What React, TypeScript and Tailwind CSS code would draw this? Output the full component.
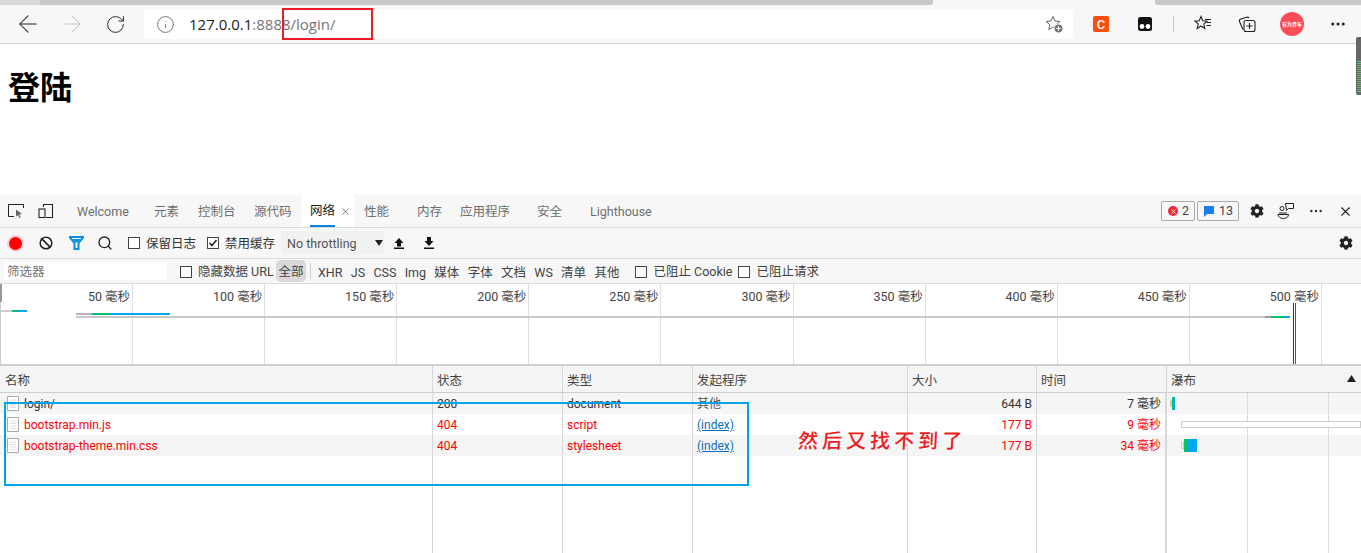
import { ArrowLeft, ArrowRight, RotateCw, Info, X, Search, Ban, MoreHorizontal } from 'lucide-react';
import { FaCog } from 'react-icons/fa';

const sans = 'font-["Roboto","Noto_Sans_CJK_SC",sans-serif]';

const tabs = [
  { label: 'Welcome', w: 'w-[77px]' },
  { label: '元素', w: 'w-[44px]' },
  { label: '控制台', w: 'w-[56px]' },
  { label: '源代码', w: 'w-[47px]' },
];
const tabsAfter = [
  { label: '性能', w: 'w-[53px]' },
  { label: '内存', w: 'w-[43px]' },
  { label: '应用程序', w: 'w-[77px]' },
  { label: '安全', w: 'w-[53px]' },
  { label: 'Lighthouse', w: 'w-[80px]' },
];
const filters = ['XHR', 'JS', 'CSS', 'Img', '媒体', '字体', '文档', 'WS', '清单', '其他'];
const ticks = ['50 毫秒', '100 毫秒', '150 毫秒', '200 毫秒', '250 毫秒', '300 毫秒', '350 毫秒', '400 毫秒', '450 毫秒', '500 毫秒'];
const columns = 'grid grid-cols-[433px_130px_130px_215px_129px_130px_1fr]';

const rows = [
  { name: 'login/', status: '200', type: 'document', from: '其他', size: '644 B', time: '7 毫秒', red: false, odd: true },
  { name: 'bootstrap.min.js', status: '404', type: 'script', from: '(index)', size: '177 B', time: '9 毫秒', red: true, odd: false },
  { name: 'bootstrap-theme.min.css', status: '404', type: 'stylesheet', from: '(index)', size: '177 B', time: '34 毫秒', red: true, odd: true },
];

function Checkbox({ checked, label }: { checked?: boolean; label: string }) {
  return (
    <label className="flex items-center gap-[6px] whitespace-nowrap">
      <span className="flex h-[12px] w-[12px] shrink-0 items-center justify-center border border-[#444] bg-white">
        {checked && (
          <svg width="10" height="10" viewBox="0 0 10 10" fill="none" stroke="#222" strokeWidth="1.6">
            <path d="M1.5 5l2.5 2.5L8.5 2" />
          </svg>
        )}
      </span>
      <span className="pt-[2px]">{label}</span>
    </label>
  );
}

function BrowserBar() {
  return (
    <div className="shrink-0">
      <div className="flex h-[5px] bg-[#f7f7f7]">
        <span className="w-[40px] bg-[#d9d9d9]" />
        <span className="w-[893px] rounded-br-[3px] bg-[#c9c9c9]" />
        <span className="ml-[222px] flex-1 rounded-bl-[3px] bg-[#c9c9c9]" />
      </div>
      <div className="flex h-[39px] items-center border-b border-[#cfcfcf] bg-[#f7f7f7]">
        <div className="flex w-[144px] items-center pl-[14px]">
          <ArrowLeft size={28} strokeWidth={0.9} className="text-[#222]" />
          <ArrowRight size={28} strokeWidth={0.9} className="ml-[16px] text-[#c8c8c8]" />
          <RotateCw size={21} strokeWidth={1.1} className="ml-[19px] text-[#222]" />
        </div>
        <div className="flex h-[30px] w-[929px] items-center rounded-[4px] bg-white pl-[12px] pr-[10px]">
          <Info size={19} strokeWidth={1.1} className="text-[#666]" />
          <span className='ml-[14px] font-["Open_Sans",sans-serif] text-[15px] text-[#222]'>127.0.0.1<span className="text-[#767676]">:8888/login/</span></span>
          <svg className="ml-auto" width="18" height="18" viewBox="0 0 18 18" fill="none" stroke="#666" strokeWidth="1">
            <path d="M8 1.500l2 4.500 4.800.5-3.600 3.200 1 4.800-4.200-2.500-4.200 2.500 1-4.800L1.200 6.500 6 6z" />
            <circle cx="13.500" cy="13.500" r="4.500" fill="#777" stroke="#fff" />
            <path d="M13.500 11.300v4.400M11.300 13.500h4.400" stroke="#fff" />
          </svg>
        </div>
        <div className="flex h-full flex-1 items-center">
          <span className="ml-[20px] flex h-[16px] w-[16px] items-center justify-center rounded-[2px] bg-[#fb4c0b] text-[13px] font-medium leading-none text-white">C</span>
          <svg className="ml-[28px]" width="16" height="16" viewBox="0 0 16 16">
            <rect x="1" y="1" width="14" height="14" rx="2.500" fill="#111" />
            <circle cx="5" cy="10.500" r="2.400" fill="#fff" />
            <circle cx="11" cy="10.500" r="2.400" fill="#fff" />
          </svg>
          <span className="ml-[20px] h-[16px] w-px bg-[#ccc]" />
          <svg className="ml-[20px]" width="18" height="18" viewBox="0 0 18 18" fill="none" stroke="#222" strokeWidth="1.100">
            <path d="M7 1.500l1.800 4.300 4.200.3-3.200 2.800 1 4.600L7 11l-3.800 2.500 1-4.600L1 6.100l4.200-.3z" />
            <path d="M11 4.500h6M12.500 7.500h4.500M12.500 10.500h4.500" />
          </svg>
          <svg className="ml-[26px]" width="18" height="18" viewBox="0 0 18 18" fill="none" stroke="#222" strokeWidth="1.100">
            <path d="M5 14.500L1.500 6.500a2 2 0 0 1 1.300-2.500l6-1.800a2 2 0 0 1 2.200.8" />
            <rect x="6" y="5.500" width="11" height="11" rx="2" />
            <path d="M11.500 8v6M8.500 11h6" />
          </svg>
          <span className="ml-[24px] flex h-[24px] w-[24px] flex-col items-center justify-center rounded-full bg-[#fb4d57] text-[5px] font-bold leading-[6px] text-white">有为青年</span>
          <MoreHorizontal size={18} strokeWidth={2} className="ml-[25px] text-[#222]" />
        </div>
      </div>
    </div>
  );
}

function DevtoolsTabs() {
  return (
    <div className="flex h-[33px] shrink-0 items-center border-b border-[#dcdcdc] bg-[#f7f7f7] pl-[8px] text-[#6e6e6e] shadow-[0_1px_2px_rgba(0,0,0,0.06)]">
      <svg width="16" height="16" viewBox="0 0 16 16" fill="none" stroke="#222" strokeWidth="1">
        <path d="M15.500 5V1.500H.5v12H6" />
        <path d="M8 6.500l6 4.500-2.800.5 1.600 3-1.200.6-1.500-3L8 13.500z" fill="#666" stroke="none" />
      </svg>
      <svg className="ml-[14px]" width="16" height="16" viewBox="0 0 16 16" fill="none" stroke="#222" strokeWidth="1.100">
        <path d="M5.500 4V1.500h9v13H8" />
        <rect x="1" y="6" width="6" height="8.500" />
      </svg>
      <div className="ml-[23px] flex h-full items-center">
        {tabs.map((t) => (
          <span key={t.label} className={`${t.w} pt-[3px]`}>{t.label}</span>
        ))}
        <span className="flex h-full w-[53px] items-center bg-white pl-[9px] text-[#222]">
          <span className="flex h-full flex-col justify-center border-b-2 border-[#0a84d8] pt-[3px]">网络</span>
          <X size={11} strokeWidth={1.5} className="ml-[5px] text-[#444]" />
        </span>
        <span className="w-[10px]" />
        {tabsAfter.map((t) => (
          <span key={t.label} className={`${t.w} pt-[3px]`}>{t.label}</span>
        ))}
      </div>
      <div className="ml-auto flex items-center pr-[8px]">
        <span className="flex h-[20px] w-[34px] items-center gap-[4px] rounded-[2px] border border-[#aaa] pl-[6px] text-[#444]">
          <span className="flex h-[10px] w-[10px] items-center justify-center rounded-full bg-[#ee2a3a]">
            <X size={7} strokeWidth={3} className="text-white" />
          </span>
          2
        </span>
        <span className="ml-[2px] flex h-[20px] w-[42px] items-center gap-[5px] rounded-[2px] border border-[#aaa] pl-[6px] text-[#444]">
          <svg width="10" height="11" viewBox="0 0 10 11">
            <path d="M0 0h10v8H3L0 11z" fill="#1a7fe8" />
          </svg>
          13
        </span>
        <FaCog size={14} color="#222" className="ml-[11px]" />
        <svg className="ml-[13px]" width="18" height="18" viewBox="0 0 18 18" fill="none" stroke="#222" strokeWidth="1">
          <circle cx="5" cy="6.500" r="2" />
          <path d="M8.500 1.500h8v5h-5l-2 1.800z" />
          <path d="M1 12.500h10.500c0 2.500-2.500 4-5.200 4S1 15 1 12.500z" />
          <path d="M2 11h8" />
        </svg>
        <MoreHorizontal size={16} strokeWidth={1.6} className="ml-[13px] text-[#333]" />
        <X size={15} strokeWidth={1.8} className="ml-[14px] text-[#222]" />
      </div>
    </div>
  );
}

function NetworkToolbar() {
  return (
    <div className="flex h-[31px] shrink-0 items-center border-b border-[#dcdcdc] bg-[#f7f7f7] pl-[9px] text-[#333]">
      <span className="h-[13px] w-[13px] rounded-full bg-[#f00] shadow-[0_0_0_2px_rgba(255,0,0,0.15)]" />
      <Ban size={14} strokeWidth={2.6} className="ml-[17px] text-[#222]" />
      <svg className="ml-[16px]" width="15" height="14" viewBox="0 0 15 14">
        <path d="M0.500 1h14L9.500 7v6h-4V7z" fill="none" stroke="#0a8fe0" strokeWidth="2" />
        <path d="M3 3h9L8.500 6.500h-2z" fill="#0a8fe0" />
      </svg>
      <Search size={16} strokeWidth={2} className="ml-[13px] text-[#222]" />
      <span className="ml-[15px]"><Checkbox label="保留日志" /></span>
      <span className="ml-[11px]"><Checkbox checked label="禁用缓存" /></span>
      <span className="ml-[6px] flex h-[24px] w-[103px] items-center justify-between bg-[#f1f1f1] pl-[6px] pr-[1px] text-[#555]">
        <span className="pt-[2px]">No throttling</span>
        <svg width="8" height="8" viewBox="0 0 8 8"><path d="M0 1h8L4 7z" fill="#222" /></svg>
      </span>
      <svg className="ml-[9px]" width="12" height="12" viewBox="0 0 12 12" fill="#111"><path d="M6 1l4.500 5H8v3.500H4V6H1.500zM1 10.500h10V12H1z" /></svg>
      <svg className="ml-[18px]" width="12" height="12" viewBox="0 0 12 12" fill="#111"><path d="M4 0h4v4h2.500L6 9 1.500 4H4zM1 10.500h10V12H1z" /></svg>
      <FaCog size={14} color="#222" className="ml-auto mr-[8px]" />
    </div>
  );
}

function FilterBar() {
  return (
    <div className="flex h-[25px] shrink-0 items-center border-b border-[#dcdcdc] bg-[#f7f7f7] pl-[4px] text-[#444]">
      <span className="flex h-[18px] w-[163px] items-center bg-white pl-[3px] pt-[3px] text-[#757575]">筛选器</span>
      <span className="ml-[13px] w-[90px] pt-[1px]"><Checkbox label="隐藏数据 URL" /></span>
      <span className="ml-[6px] flex h-[22px] w-[30px] items-center justify-center rounded-[5px] bg-[#d8d8d8] pt-[3px]">全部</span>
      <span className="ml-[4px] h-[16px] w-px bg-[#ccc]" />
      <div className="ml-[7px] flex items-center gap-[8.3px] pt-[4px]">
        {filters.map((f) => <span key={f}>{f}</span>)}
      </div>
      <span className="ml-[16px] w-[93px] pt-[1px]"><Checkbox label="已阻止 Cookie" /></span>
      <span className="ml-[10px] pt-[1px]"><Checkbox label="已阻止请求" /></span>
    </div>
  );
}

function Timeline() {
  return (
    <div className="relative h-[80px] shrink-0 overflow-hidden bg-white text-[#444]">
      <div className="flex h-full">
        <div className="w-[1px] bg-[#ccc]" />
        {ticks.map((t) => (
          <div key={t} className="h-full w-[132.1px] shrink-0 border-r border-[#e0e0e0] pr-[2px] pt-[4px] text-right">{t}</div>
        ))}
      </div>
      <div className="absolute left-0 top-0 h-[18px] w-[2px] bg-[#999]" />
      {/* first request bar */}
      <div className="absolute left-[1px] top-[26px] flex h-[2px] w-[26px]">
        <span className="w-[11px] bg-[#ccc]" />
        <span className="w-[5px] bg-[#0ac26a]" />
        <span className="flex-1 bg-[#00a8f0]" />
      </div>
      <div className="absolute left-[76px] top-[29px] flex h-[2px] w-[94px]">
        <span className="w-[16px] bg-[#b5b5b5]" />
        <span className="w-[18px] bg-[#0ac26a]" />
        <span className="flex-1 bg-[#00a8f0]" />
      </div>
      <div className="absolute left-[76px] top-[32px] flex h-[2px] w-[1214px] bg-[#c8c8c8]">
        <span className="absolute right-[19px] h-[2px] w-[6px] bg-[#999]" />
        <span className="absolute right-[7px] h-[2px] w-[12px] bg-[#0ac26a]" />
        <span className="absolute right-0 h-[2px] w-[7px] bg-[#00a8f0]" />
      </div>
      <div className="absolute left-[1293px] top-[19px] h-[61px] w-[1px] bg-[#b00020]" />
      <div className="absolute left-[1295px] top-[19px] h-[61px] w-[1px] bg-[#1a5fc0]" />
    </div>
  );
}

function Waterfall({ index }: { index: number }) {
  return (
    <div className="relative h-full">
      <span className="absolute left-[80px] top-0 h-full w-px bg-[#dcdcdc]" />
      <span className="absolute left-[161px] top-0 h-full w-px bg-[#dcdcdc]" />
      {index === 0 && (
        <span className="absolute left-[3px] top-[4px] flex h-[13px] items-center">
          <span className="h-[7px] w-[2px] border border-[#ccc]" />
          <span className="h-[13px] w-[1px] bg-[#0ac26a]" />
          <span className="h-[13px] w-[2px] bg-[#00a8f0]" />
        </span>
      )}
      {index === 1 && <span className="absolute left-[14px] top-[7px] h-[7px] w-[180px] border border-[#ccc] bg-white" />}
      {index === 2 && (
        <span className="absolute left-[14px] top-[4px] flex h-[13px] items-center">
          <span className="h-[7px] w-[3px] border border-[#ccc]" />
          <span className="h-[13px] w-[3px] bg-[#0ac26a]" />
          <span className="h-[13px] w-[10px] bg-[#00a8f0]" />
        </span>
      )}
    </div>
  );
}

function RequestTable() {
  const cell = 'border-r border-[#d8d8d8] pl-[4px] truncate';
  return (
    <div className="flex min-h-0 flex-1 flex-col border-t-2 border-[#cfcfcf] bg-white">
      <div className={`${columns} h-[27px] shrink-0 items-stretch border-b border-[#cfcfcf] bg-[#f5f5f5] leading-[29px] text-[#444]`}>
        {['名称', '状态', '类型', '发起程序', '大小', '时间'].map((h) => (
          <div key={h} className={cell}><span className={h === '名称' ? 'ml-[1px]' : ''}>{h}</span></div>
        ))}
        <div className="flex justify-between pl-[4px] pr-[5px]">
          瀑布
          <svg className="mt-[9px]" width="9" height="7" viewBox="0 0 9 7"><path d="M0 7L4.500 0 9 7z" fill="#222" /></svg>
        </div>
      </div>
      {rows.map((r, i) => (
        <div
          key={r.name}
          className={`${columns} h-[21px] shrink-0 text-[12px] leading-[23px] ${r.odd ? 'bg-[#f5f5f5]' : 'bg-white'} ${r.red ? 'text-[#f00]' : 'text-[#333]'}`}
        >
          <div className={`${cell} flex h-[21px] items-center gap-[5px] pl-[7px]`}>
            <svg width="12" height="15" viewBox="0 0 12 15" fill="#fff" stroke="#aaa">
              <path d="M0.500 0.500h11v14h-11z" />
              <path d="M3 4h6M3 6.500h6M3 9h6M3 11.500h6" stroke="#ddd" />
            </svg>
            <span className="pt-[2px]">{r.name}</span>
          </div>
          <div className={`${cell} h-[21px]`}>{r.status}</div>
          <div className={`${cell} h-[21px]`}>{r.type}</div>
          <div className={`${cell} h-[21px] ${r.red ? 'text-[#0b6cb8] underline' : 'text-[#555]'}`}>{r.from}</div>
          <div className={`${cell} h-[21px] pr-[4px] text-right`}>{r.size}</div>
          <div className={`${cell} h-[21px] border-r-2 pr-[4px] text-right`}>{r.time}</div>
          <Waterfall index={i} />
        </div>
      ))}
      <div className={`${columns} flex-1`}>
        {[0, 1, 2, 3, 4].map((n) => <div key={n} className={cell} />)}
        <div className="border-r-2 border-[#d8d8d8]" />
        <Waterfall index={-1} />
      </div>
    </div>
  );
}

export default function App() {
  return (
    <div className={`relative flex h-[553px] w-[1361px] flex-col overflow-hidden bg-white text-[12.5px] ${sans}`}>
      <BrowserBar />
      <main className="h-[151px] shrink-0 pl-[8px] pt-[20px]">
        <h1 className="text-[32px] font-bold leading-[48px] text-black">登陆</h1>
      </main>
      <DevtoolsTabs />
      <NetworkToolbar />
      <FilterBar />
      <Timeline />
      <RequestTable />

      {/* scrollbar of the page */}
      <div className="absolute left-[1356px] top-[37px] h-[58px] w-[5px] rounded-l-[2px] bg-[#666] pl-[1px] pt-[24px]">
        <div className="h-[32px] bg-[repeating-linear-gradient(#5fbf6f_0_1px,#666_1px_2px)]" />
      </div>

      {/* hand drawn notes over the screenshot */}
      <div className="absolute left-[282px] top-[8px] h-[32px] w-[91px] border-2 border-[#ed1c24]" />
      <div className="absolute left-[4px] top-[402px] h-[84px] w-[745px] border-2 border-[#00a2e8]" />
      <span className="absolute left-[798px] top-[426px] -skew-x-3 text-[20px] font-medium tracking-[4px] text-[#ed1c24]">然后又找不到了</span>
    </div>
  );
}
